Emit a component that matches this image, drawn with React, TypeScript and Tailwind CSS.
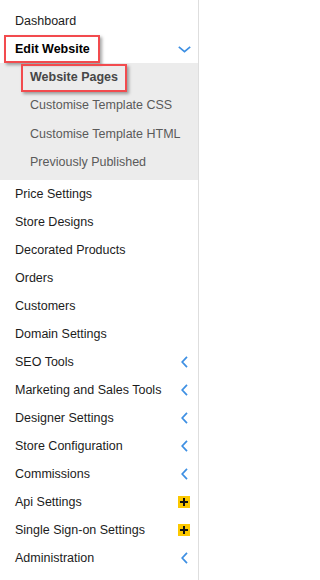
import React from "react";

const ChevronLeft = () => (
  <svg width="7" height="12" viewBox="0 0 7 12" fill="none">
    <polyline points="6,0.8 1.2,6 6,11.2" stroke="#3d8fe3" strokeWidth="1.7" />
  </svg>
);

const ChevronDown = () => (
  <svg width="13" height="7" viewBox="0 0 13 7" fill="none">
    <polyline points="0.8,0.8 6.5,5.6 12.2,0.8" stroke="#3d8fe3" strokeWidth="1.7" />
  </svg>
);

const PlusBadge = () => (
  <span className="flex h-[12px] w-[12px] items-center justify-center bg-[#fcc800]">
    <svg width="8" height="8" viewBox="0 0 8 8">
      <rect x="3" y="0" width="2" height="8" fill="#111" />
      <rect x="0" y="3" width="8" height="2" fill="#111" />
    </svg>
  </span>
);

type Item = { label: string; icon?: "left" | "plus" };

const items: Item[] = [
  { label: "Price Settings" },
  { label: "Store Designs" },
  { label: "Decorated Products" },
  { label: "Orders" },
  { label: "Customers" },
  { label: "Domain Settings" },
  { label: "SEO Tools", icon: "left" },
  { label: "Marketing and Sales Tools", icon: "left" },
  { label: "Designer Settings", icon: "left" },
  { label: "Store Configuration", icon: "left" },
  { label: "Commissions", icon: "left" },
  { label: "Api Settings", icon: "plus" },
  { label: "Single Sign-on Settings", icon: "plus" },
  { label: "Administration", icon: "left" },
];

const subItems = [
  "Customise Template CSS",
  "Customise Template HTML",
  "Previously Published",
];

const Row = ({ label, icon }: Item) => (
  <div className="flex h-[28px] items-center justify-between pl-[15px] pr-[7px]">
    <span className="leading-[15px] text-[#1c1c1c]">{label}</span>
    <span className="flex w-[14px] justify-center">
      {icon === "left" && <ChevronLeft />}
      {icon === "plus" && <PlusBadge />}
    </span>
  </div>
);

export default function App() {
  return (
    <div
      className="h-[580px] w-[200px] overflow-hidden bg-white text-[12.5px]"
      style={{ fontFamily: '"Liberation Sans", Arial, sans-serif' }}
    >
      <div className="h-full w-[199px] border-r border-[#dedede] pt-[7px]">
        <Row label="Dashboard" />

        <div className="flex h-[28px] items-center justify-between pl-[15px] pr-[7px]">
          <span className="relative font-bold leading-[15px] text-black">
            Edit Website
            <span className="absolute -bottom-[6px] -left-[11px] -right-[10px] -top-[7px] border-2 border-[#f24b4e] shadow-[2px_2px_3px_rgba(0,0,0,0.35)]" />
          </span>
          <span className="flex w-[14px] justify-center">
            <ChevronDown />
          </span>
        </div>

        <div className="bg-[#ececec] pb-[3px]">
          <div className="flex h-[28.5px] items-center pl-[30px]">
            <span className="relative font-bold leading-[15px] text-[#474747]">
              Website Pages
              <span className="absolute -bottom-[7px] -left-[9px] -right-[9px] -top-[6px] border-2 border-[#f24b4e] shadow-[2px_2px_3px_rgba(0,0,0,0.35)]" />
            </span>
          </div>
          {subItems.map((s) => (
            <div key={s} className="flex h-[28.5px] items-center pl-[30px]">
              <span className="leading-[15px] text-[#5a5a5a]">{s}</span>
            </div>
          ))}
        </div>

        <div>
          {items.map((it) => (
            <Row key={it.label} {...it} />
          ))}
        </div>
      </div>
    </div>
  );
}
